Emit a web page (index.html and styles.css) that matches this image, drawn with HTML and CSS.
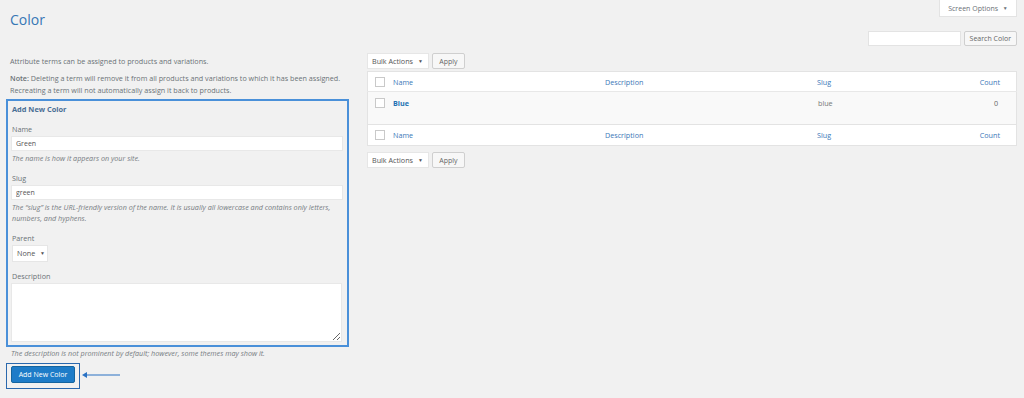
FILE: index.html
```html
<!DOCTYPE html>
<html lang="en">
<head>
    <meta charset="UTF-8">
    <title>Color &lsaquo; Attributes</title>
    <link rel="stylesheet" href="styles.css">
</head>
<body>
    <!-- Header -->
    <div class="top-bar">
        <h1 class="page-title">Color</h1>
        <button class="screen-options">Screen Options <span class="caret">&#9660;</span></button>
    </div>

    <div class="columns">
        <!-- Left column: add new term -->
        <div class="col-left">
            <p class="intro">Attribute terms can be assigned to products and variations.</p>
            <p class="intro note"><b>Note:</b> Deleting a term will remove it from all products and variations to which it has been assigned. Recreating a term will not automatically assign it back to products.</p>

            <div class="form-box">
                <h2 class="form-title">Add New Color</h2>

                <label class="field-label">Name</label>
                <input type="text" class="text-input" value="Green">
                <p class="hint">The name is how it appears on your site.</p>

                <label class="field-label">Slug</label>
                <input type="text" class="text-input" value="green">
                <p class="hint">The &ldquo;slug&rdquo; is the URL-friendly version of the name. It is usually all lowercase and contains only letters, numbers, and hyphens.</p>

                <label class="field-label">Parent</label>
                <div class="select parent-select">None <span class="caret">&#9660;</span></div>

                <label class="field-label">Description</label>
                <textarea class="text-area"></textarea>
            </div>
            <p class="hint desc-hint">The description is not prominent by default; however, some themes may show it.</p>

            <div class="submit-row">
                <div class="submit-box">
                    <button class="primary-button">Add New Color</button>
                </div>
                <svg class="arrow" width="40" height="8" viewBox="0 0 40 8">
                    <line x1="3" y1="4" x2="38" y2="4" stroke="#2a72c4" stroke-width="1.2"/>
                    <path d="M0 4 L5 1 L5 7 Z" fill="#2a72c4"/>
                </svg>
            </div>
        </div>

        <!-- Right column: terms table -->
        <div class="col-right">
            <div class="search-row">
                <input type="text" class="search-input">
                <button class="small-button">Search Color</button>
            </div>

            <div class="bulk-row">
                <div class="select bulk-select">Bulk Actions <span class="caret">&#9660;</span></div>
                <button class="small-button">Apply</button>
            </div>

            <table class="terms-table">
                <thead>
                    <tr class="head-row">
                        <td class="cb"><span class="checkbox"></span></td>
                        <td class="col-name"><a href="#">Name</a></td>
                        <td class="col-desc"><a href="#">Description</a></td>
                        <td class="col-slug"><a href="#">Slug</a></td>
                        <td class="col-count"><a href="#">Count</a></td>
                    </tr>
                </thead>
                <tbody>
                    <tr class="term-row">
                        <td class="cb"><span class="checkbox"></span></td>
                        <td class="col-name"><a href="#" class="term-link">Blue</a></td>
                        <td class="col-desc"></td>
                        <td class="col-slug slug-text">blue</td>
                        <td class="col-count count-num">0</td>
                    </tr>
                </tbody>
                <tfoot>
                    <tr class="head-row">
                        <td class="cb"><span class="checkbox"></span></td>
                        <td class="col-name"><a href="#">Name</a></td>
                        <td class="col-desc"><a href="#">Description</a></td>
                        <td class="col-slug"><a href="#">Slug</a></td>
                        <td class="col-count"><a href="#">Count</a></td>
                    </tr>
                </tfoot>
            </table>

            <div class="bulk-row bottom">
                <div class="select bulk-select">Bulk Actions <span class="caret">&#9660;</span></div>
                <button class="small-button">Apply</button>
            </div>
        </div>
    </div>
</body>
</html>
```

FILE: styles.css
```css
body {
    font-family: "Open Sans", "Noto Sans", sans-serif;
    font-size: 7.2px;
    color: #6b7177;
    margin: 0;
    padding: 0 6px 0 6px;
    background-color: #f1f1f1;
}
p {
    margin: 0;
}
a {
    color: #3b78b8;
    text-decoration: none;
}
.top-bar {
    display: flex;
    justify-content: space-between;
    align-items: flex-start;
    height: 31px;
}
.page-title {
    font-weight: 400;
    font-size: 14px;
    color: #3677b5;
    margin: 10px 0 0 4px;
    line-height: 20px;
}
.screen-options {
    font-family: inherit;
    font-size: 7px;
    color: #6b7177;
    background: #fff;
    border: 1px solid #e3e3e3;
    border-top: none;
    width: 78px;
    height: 17px;
    padding: 0;
    margin-right: 1px;
}
.caret {
    font-size: 5px;
    margin-left: 3px;
    vertical-align: 1px;
}
.columns {
    display: grid;
    grid-template-columns: 343px 650px;
    column-gap: 18px;
}

/* left column */
.intro {
    line-height: 12px;
    margin-left: 4px;
}
.col-left .intro:first-child {
    margin-top: 24px;
}
.note {
    margin-top: 5px;
}
.note b {
    font-weight: 600;
}
.form-box {
    border: 2px solid #4a90d9;
    margin-top: 3px;
    height: 244px;
    padding: 0 4px 0 3px;
    display: flex;
    flex-direction: column;
    align-items: flex-start;
}
.form-title {
    font-size: 7.4px;
    font-weight: 700;
    color: #4a6e95;
    margin: 3px 0 0 1px;
    line-height: 11px;
}
.field-label {
    line-height: 10px;
    margin: 9px 0 2px 1px;
}
.text-input {
    box-sizing: border-box;
    width: 332px;
    height: 15px;
    border: 1px solid #e8e8e8;
    background: #fff;
    font-family: inherit;
    font-size: 7px;
    color: #555;
    padding: 0 4px;
    margin: 0;
}
.hint {
    font-style: italic;
    line-height: 11px;
    margin: 2px 0 0 1px;
    color: #777c82;
}
.select {
    background: #fff;
    border: 1px solid #e6e6e6;
    box-sizing: border-box;
    height: 17px;
    line-height: 15px;
    padding: 0 4px;
    color: #555;
    white-space: nowrap;
}
.parent-select {
    width: 36px;
    margin-left: 1px;
}
.text-area {
    box-sizing: border-box;
    width: 331px;
    height: 59px;
    border: 1px solid #e8e8e8;
    background: #fff;
    margin: 0;
    resize: both;
}
.desc-hint {
    margin: 1px 0 0 5px;
}
.submit-row {
    display: flex;
    align-items: center;
    margin-top: 4px;
}
.submit-box {
    border: 1px solid #2a68ad;
    padding: 2px 4px 5px 4px;
}
.primary-button {
    font-family: inherit;
    font-size: 7px;
    color: #fff;
    background: #1e7cc8;
    border: 1px solid #15659f;
    border-radius: 2px;
    width: 64px;
    height: 17px;
    padding: 0;
}
.arrow {
    margin-left: 2px;
    margin-top: -3px;
}

/* right column */
.search-row {
    display: flex;
    justify-content: flex-end;
    gap: 3px;
}
.search-input {
    box-sizing: border-box;
    width: 93px;
    height: 15px;
    border: 1px solid #e3e3e3;
    background: #fff;
    margin: 0;
}
.small-button {
    font-family: inherit;
    font-size: 7px;
    color: #666;
    background: #f7f7f7;
    border: 1px solid #cfcfcf;
    border-radius: 2px;
    height: 16px;
    padding: 0 5px;
}
.search-row .small-button {
    height: 15px;
}
.bulk-row {
    display: flex;
    gap: 3px;
    margin-top: 7px;
}
.bulk-row.bottom {
    margin-top: 6px;
}
.bulk-select {
    width: 62px;
    height: 16px;
    line-height: 14px;
}
.bulk-row .small-button {
    width: 33px;
    padding: 0;
}
.terms-table {
    width: 650px;
    border-collapse: collapse;
    border: 1px solid #e3e3e3;
    margin-top: 2px;
    color: #666;
}
.terms-table td {
    padding: 0;
    vertical-align: middle;
}
.head-row {
    background: #fff;
    height: 20px;
}
tfoot .head-row {
    border-top: 1px solid #e3e3e3;
    height: 21px;
}
thead .head-row {
    border-bottom: 1px solid #e8e8e8;
}
.term-row {
    background: #f9f9f9;
    height: 33px;
}
.term-row td {
    vertical-align: top;
    padding-top: 6px;
}
.cb {
    width: 25px;
}
.checkbox {
    display: block;
    box-sizing: border-box;
    width: 10px;
    height: 10px;
    border: 1px solid #c9c9c9;
    background: #fff;
    margin-left: 7px;
}
.col-name {
    width: 212px;
}
.col-desc {
    width: 212px;
}
.col-count {
    width: 80px;
    text-align: right;
    padding-right: 16px !important;
}
.count-num {
    padding-right: 18px !important;
}
.slug-text {
    color: #777;
    padding-left: 1px !important;
}
.term-link {
    font-weight: 700;
    color: #2371b3;
}
```
